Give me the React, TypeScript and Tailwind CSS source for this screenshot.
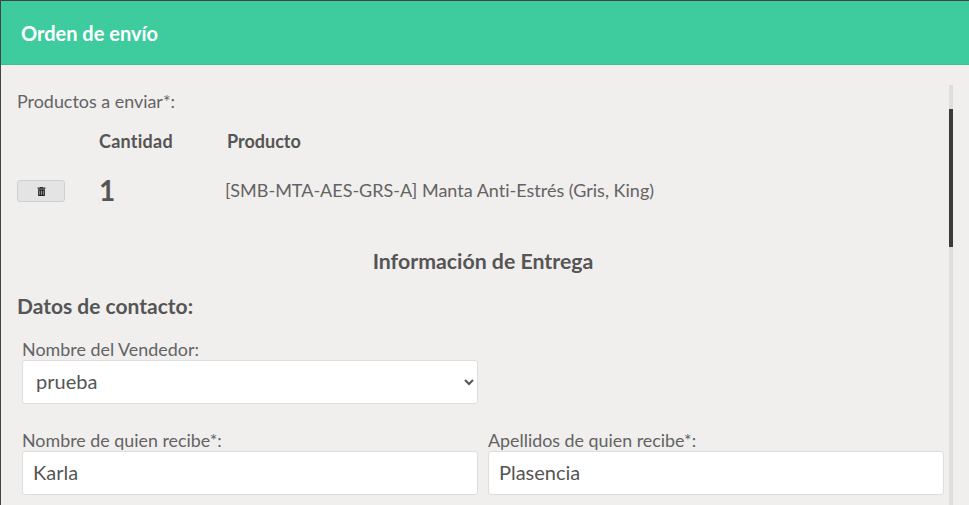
import { FaTrashAlt } from 'react-icons/fa';

function Field({ label, value }: { label: string; value: string }) {
  return (
    <div className="w-[456px]">
      <label className="block h-[20px] text-[17.85px] leading-[19px] text-[#636363]">{label}</label>
      <input
        readOnly
        value={value}
        className="block h-[44px] w-full rounded-[3px] border border-[#dddddd] bg-white px-[10px] pb-[2px] text-[20px] text-[#555555] outline-none"
      />
    </div>
  );
}

export default function App() {
  return (
    <div className="h-[505px] w-[969px] overflow-hidden border-l border-t border-[#444444] bg-[#f0efee] font-['Lato',sans-serif] text-[#555555] [font-variant-ligatures:none]">
      <header className="flex h-[64px] items-center border-b border-[#3bbf96] bg-[#3ecb9e] pl-[20px]">
        <h1 className="text-[20px] font-bold text-white">Orden de envío</h1>
      </header>

      <div className="flex">
        <main className="w-[948px] pl-[16px] pt-[25px]">
          <p className="h-[22px] text-[17.9px] leading-[22px] text-[#636363]">Productos a enviar*:</p>

          <div className="mt-[18px] flex h-[22px] text-[18px] font-bold leading-[22px]">
            <span className="ml-[82px] w-[128px] tracking-[0.25px]">Cantidad</span>
            <span>Producto</span>
          </div>

          <div className="mt-[22px] flex h-[34px] items-center">
            <button className="flex h-[22px] w-[48px] items-center justify-center rounded-[3px] border border-[#cfcfcf] bg-[#e4e4e4] text-[#222222]">
              <FaTrashAlt size={9} />
            </button>
            <span className="mb-[2px] ml-[34px] w-[126px] text-[28px] font-bold leading-[34px]">1</span>
            <span className="mb-[2px] text-[18px] text-[#636363]">[SMB-MTA-AES-GRS-A] Manta Anti-Estrés (Gris, King)</span>
          </div>

          <h2 className="mt-[40px] h-[26px] text-center text-[21.3px] font-bold leading-[26px]">Información de Entrega</h2>

          <h3 className="mt-[19px] h-[26px] text-[21px] font-bold leading-[26px]">Datos de contacto:</h3>

          <div className="mt-[21px] pl-[5px]">
            <label className="block h-[20px] text-[17.9px] leading-[19px] text-[#636363]">Nombre del Vendedor:</label>
            <select
              defaultValue="prueba"
              className="block h-[44px] w-[456px] rounded-[3px] border border-[#dddddd] bg-white px-[9px] pb-[2px] text-[20px] text-[#555555] outline-none"
            >
              <option value="prueba">prueba</option>
            </select>

            <div className="mt-[27px] flex gap-[10px]">
              <Field label="Nombre de quien recibe*:" value="Karla" />
              <Field label="Apellidos de quien recibe*:" value="Plasencia" />
            </div>
          </div>
        </main>

        <div className="mt-[20px] h-[420px] w-[4px] bg-[#dedede]">
          <div className="mt-[24px] h-[138px] w-full bg-[#3a3a3a]" />
        </div>
      </div>
    </div>
  );
}
